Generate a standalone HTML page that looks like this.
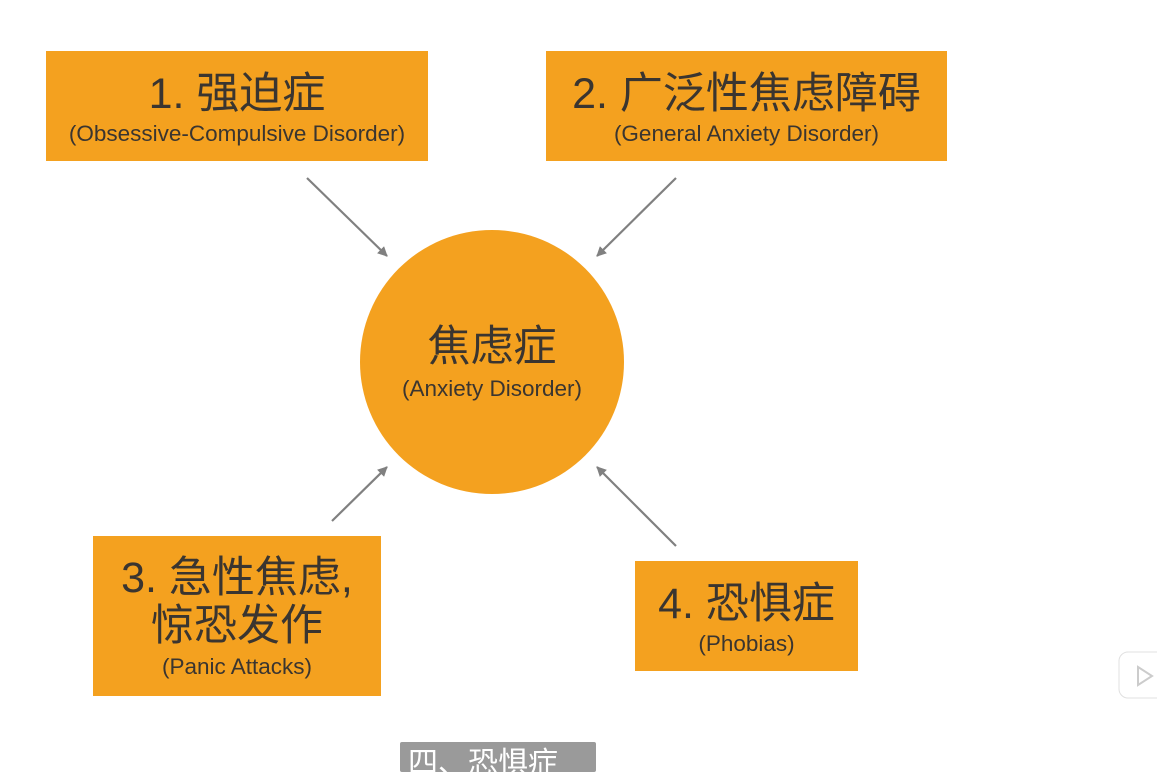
<!DOCTYPE html>
<html><head><meta charset="utf-8"><style>
body{margin:0;width:1157px;height:762px;background:#fff;position:relative;overflow:hidden;font-family:"Liberation Sans","Noto Sans CJK SC",sans-serif;color:#3a3530}
.b{position:absolute;background:#F4A11F;text-align:center}
.t{font-size:43px;line-height:46px}
.s{font-size:22.5px;line-height:26px}
</style></head><body>
<div class="b" style="left:46px;top:51px;width:382px;height:110px"><div class="t" style="margin-top:20px">1. 强迫症</div><div class="s" style="margin-top:4px">(Obsessive-Compulsive Disorder)</div></div>
<div class="b" style="left:546px;top:51px;width:401px;height:110px"><div class="t" style="margin-top:20px">2. 广泛性焦虑障碍</div><div class="s" style="margin-top:4px">(General Anxiety Disorder)</div></div>
<div class="b" style="left:93px;top:536px;width:288px;height:160px"><div class="t" style="margin-top:19px">3. 急性焦虑,</div><div class="t" style="margin-top:2px">惊恐发作</div><div class="s" style="margin-top:5px">(Panic Attacks)</div></div>
<div class="b" style="left:635px;top:561px;width:223px;height:110px"><div class="t" style="margin-top:20px">4. 恐惧症</div><div class="s" style="margin-top:4px">(Phobias)</div></div>
<div class="b" style="left:360px;top:230px;width:264px;height:264px;border-radius:50%"><div class="t" style="margin-top:94px">焦虑症</div><div class="s" style="margin-top:6px">(Anxiety Disorder)</div></div>
<svg width="1157" height="762" style="position:absolute;left:0;top:0">
<defs><marker id="a" markerWidth="10" markerHeight="10" refX="9" refY="5" orient="auto" markerUnits="userSpaceOnUse"><path d="M0,0 L10,5 L0,10 z" fill="#808080"/></marker></defs>
<g stroke="#808080" stroke-width="2.2" marker-end="url(#a)">
<line x1="307" y1="178" x2="387" y2="256"/>
<line x1="676" y1="178" x2="597" y2="256"/>
<line x1="332" y1="521" x2="387" y2="467"/>
<line x1="676" y1="546" x2="597" y2="467"/>
</g>
<rect x="1119" y="652" width="50" height="46" rx="9" fill="#fff" stroke="#e0e0e0"/>
<path d="M1138 667 L1152 676 L1138 685 z" fill="none" stroke="#ccc" stroke-width="2"/>
</svg>
<div style="position:absolute;left:400px;top:742px;width:196px;height:30px;background:#9a9a9a;border-radius:2px;color:#fff;font-size:30px;line-height:44px;padding-left:8px;box-sizing:border-box;white-space:nowrap;overflow:hidden">四、恐惧症</div>
</body></html>
